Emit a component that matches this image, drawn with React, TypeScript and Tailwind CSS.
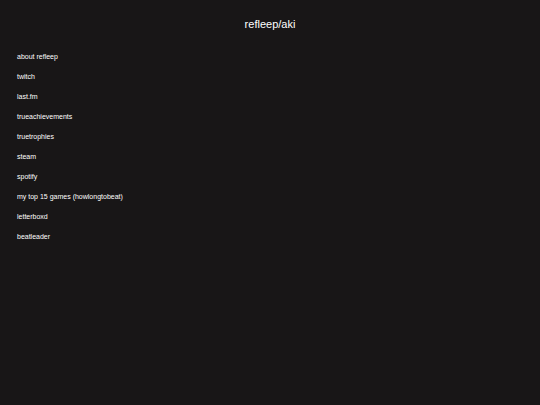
/**
 * App.tsx : Link page with a centered title and a plain list of profile links.
 */

const links = [
  { label: "about refleep", href: "#about" },
  { label: "twitch", href: "#twitch" },
  { label: "last.fm", href: "#lastfm" },
  { label: "trueachievements", href: "#trueachievements" },
  { label: "truetrophies", href: "#truetrophies" },
  { label: "steam", href: "#steam" },
  { label: "spotify", href: "#spotify" },
  { label: "my top 15 games (howlongtobeat)", href: "#howlongtobeat" },
  { label: "letterboxd", href: "#letterboxd" },
  { label: "beatleader", href: "#beatleader" },
];

const App = () => {
  return (
    <main className="min-h-screen bg-[#181617] px-[17px] pt-4 font-['Liberation_Sans',Arial,sans-serif] text-white">
      {/* Title */}
      <h1 className="text-center text-[11px] leading-4">refleep/aki</h1>

      {/* Links */}
      <nav className="mt-[15px]">
        <ul>
          {links.map((link) => (
            <li key={link.label} className="flex h-5 items-center text-[7px] leading-3">
              <a href={link.href}>{link.label}</a>
            </li>
          ))}
        </ul>
      </nav>
    </main>
  );
};

export default App;
